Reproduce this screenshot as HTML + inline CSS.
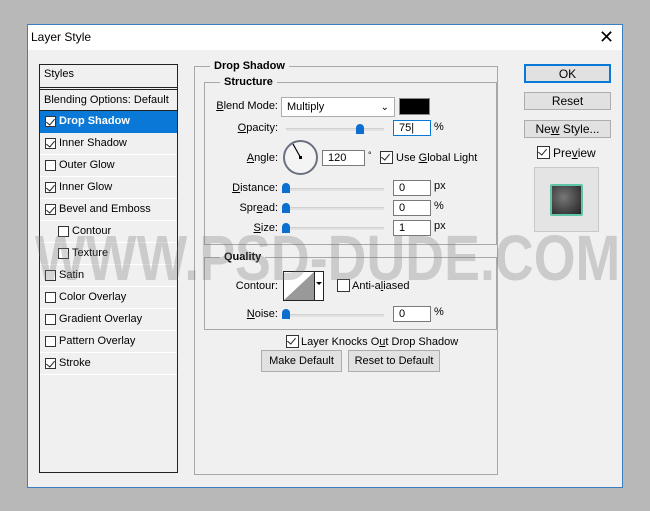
<!DOCTYPE html><html><head><style>
*{margin:0;padding:0;box-sizing:border-box}
body{width:650px;height:511px;background:#b8b8b8;position:relative;overflow:hidden;font-family:"Liberation Sans",sans-serif;font-size:11px;color:#000}
.a{position:absolute}
.dlg{left:27px;top:24px;width:596px;height:464px;background:#f0f0f0;border:1px solid #3c7fc1}
.title{left:28px;top:25px;width:594px;height:25px;background:#fff}
.cb{position:absolute;width:11px;height:11px;border:1px solid #333;background:#fff}
.chk::after{content:"";position:absolute;left:2px;top:0px;width:4px;height:7px;border:solid #222;border-width:0 1.3px 1.3px 0;transform:rotate(40deg)}
.row{position:absolute;left:40px;width:137px;height:22px;border-bottom:1px solid #fff;line-height:21px}
.fs{position:absolute;border:1px solid #a8a8a8}
.leg{position:absolute;background:#f0f0f0;font-weight:bold;padding:0 4px;font-size:11px}
.lbl{position:absolute;text-align:right;font-size:11px}
.inp{position:absolute;background:#fff;border:1px solid #7a7a7a;height:16px;padding-left:5px;line-height:15px;font-size:11px}
.track{position:absolute;height:3px;background:#e2e2e2;border-top:1px solid #d0d0d0}
.th{position:absolute;width:8px;height:10px;background:#0a6fcf;border-radius:4px 4px 0 0}
.btn{position:absolute;background:#e1e1e1;border:1px solid #adadad;text-align:center;font-size:12px}
u{text-decoration:underline}
</style></head><body>
<div class="a dlg"></div>
<div class="a title"></div>
<div class="a" style="left:31px;top:30px;font-size:12px">Layer Style</div>
<div class="a" style="left:599px;top:27px;font-size:18px;font-weight:300">✕</div>

<div class="a" style="left:39px;top:64px;width:139px;height:409px;border:1px solid #222;background:#f0f0f0"></div>
<div class="a" style="left:44px;top:68px">Styles</div>
<div class="a" style="left:40px;top:87px;width:137px;height:3px;border-top:1px solid #222;border-bottom:1px solid #222"></div>
<div class="a" style="left:44px;top:94px">Blending Options: Default</div>
<div class="a" style="left:40px;top:110px;width:137px;border-top:1px solid #222"></div>
<div class="a" style="left:40px;top:111px;width:137px;height:22px;background:#0a78d7"></div>
<div class="cb chk" style="left:45px;top:116px"></div>
<div class="a" style="left:59px;top:115px;color:#fff;font-weight:bold">Drop Shadow</div>
<div class="row" style="top:133px"><div class="cb chk" style="left:5px;top:5px"></div><span style="margin-left:19px">Inner Shadow</span></div>
<div class="row" style="top:155px"><div class="cb" style="left:5px;top:5px"></div><span style="margin-left:19px">Outer Glow</span></div>
<div class="row" style="top:177px"><div class="cb chk" style="left:5px;top:5px"></div><span style="margin-left:19px">Inner Glow</span></div>
<div class="row" style="top:199px"><div class="cb chk" style="left:5px;top:5px"></div><span style="margin-left:19px">Bevel and Emboss</span></div>
<div class="row" style="top:221px"><div class="cb" style="left:18px;top:5px"></div><span style="margin-left:32px">Contour</span></div>
<div class="row" style="top:243px"><div class="cb" style="left:18px;top:5px"></div><span style="margin-left:32px">Texture</span></div>
<div class="row" style="top:265px"><div class="cb" style="left:5px;top:5px"></div><span style="margin-left:19px">Satin</span></div>
<div class="row" style="top:287px"><div class="cb" style="left:5px;top:5px"></div><span style="margin-left:19px">Color Overlay</span></div>
<div class="row" style="top:309px"><div class="cb" style="left:5px;top:5px"></div><span style="margin-left:19px">Gradient Overlay</span></div>
<div class="row" style="top:331px"><div class="cb" style="left:5px;top:5px"></div><span style="margin-left:19px">Pattern Overlay</span></div>
<div class="row" style="top:353px"><div class="cb chk" style="left:5px;top:5px"></div><span style="margin-left:19px">Stroke</span></div>

<div class="fs" style="left:194px;top:66px;width:304px;height:409px"></div>
<div class="leg" style="left:210px;top:60px">Drop Shadow</div>
<div class="fs" style="left:204px;top:82px;width:293px;height:163px"></div>
<div class="leg" style="left:220px;top:76px">Structure</div>
<div class="lbl" style="left:200px;width:78px;top:100px"><u>B</u>lend Mode:</div>
<div class="inp" style="left:281px;top:97px;width:114px;height:20px;border-color:#adadad;line-height:19px">Multiply<span style="position:absolute;right:5px;top:0;font-size:10px">&#8964;</span></div>
<div class="a" style="left:399px;top:98px;width:31px;height:17px;background:#000;border:1px solid #888"></div>
<div class="lbl" style="left:200px;width:78px;top:122px"><u>O</u>pacity:</div>
<div class="track" style="left:286px;top:128px;width:98px"></div>
<div class="th" style="left:356px;top:124px"></div>
<div class="inp" style="left:393px;top:120px;width:38px;border:1px solid #0a78d7">75|</div>
<div class="a" style="left:434px;top:121px">%</div>
<div class="lbl" style="left:200px;width:78px;top:152px"><u>A</u>ngle:</div>
<svg class="a" style="left:282px;top:139px" width="37" height="37"><circle cx="18.5" cy="18.5" r="16.5" fill="#f4f4f4" stroke="#6a7080" stroke-width="2"/><line x1="18.5" y1="18.5" x2="11" y2="5" stroke="#000" stroke-width="1.2"/><rect x="17" y="17" width="3" height="3" fill="#000"/></svg>
<div class="inp" style="left:322px;top:150px;width:43px">120</div>
<div class="a" style="left:368px;top:150px;font-size:9px">°</div>
<div class="cb chk" style="left:380px;top:151px;width:13px;height:13px"></div>
<div class="a" style="left:396px;top:152px">Use <u>G</u>lobal Light</div>
<div class="lbl" style="left:200px;width:78px;top:182px"><u>D</u>istance:</div>
<div class="track" style="left:286px;top:188px;width:98px"></div>
<div class="th" style="left:282px;top:183px"></div>
<div class="inp" style="left:393px;top:180px;width:38px">0</div><div class="a" style="left:434px;top:180px">px</div>
<div class="lbl" style="left:200px;width:78px;top:202px">Spr<u>e</u>ad:</div>
<div class="track" style="left:286px;top:207px;width:98px"></div>
<div class="th" style="left:282px;top:203px"></div>
<div class="inp" style="left:393px;top:200px;width:38px">0</div><div class="a" style="left:434px;top:200px">%</div>
<div class="lbl" style="left:200px;width:78px;top:222px"><u>S</u>ize:</div>
<div class="track" style="left:286px;top:227px;width:98px"></div>
<div class="th" style="left:282px;top:223px"></div>
<div class="inp" style="left:393px;top:220px;width:38px">1</div><div class="a" style="left:434px;top:220px">px</div>

<div class="fs" style="left:204px;top:257px;width:293px;height:73px"></div>
<div class="leg" style="left:220px;top:251px">Quality</div>
<div class="lbl" style="left:200px;width:78px;top:280px">Contour:</div>
<div class="a" style="left:283px;top:271px;width:41px;height:30px;border:1px solid #222;background:#fff;overflow:hidden">
<svg width="32" height="28" style="position:absolute;left:0;top:0"><polygon points="0,28 30,0 30,28" fill="#999"/></svg>
<div style="position:absolute;left:30px;top:0;width:1px;height:30px;background:#222"></div>
<div style="position:absolute;left:32px;top:10px;border:3px solid transparent;border-top:3px solid #000"></div></div>
<div class="cb" style="left:337px;top:279px;width:13px;height:13px"></div>
<div class="a" style="left:352px;top:280px">Anti-a<u>l</u>iased</div>
<div class="lbl" style="left:200px;width:78px;top:308px"><u>N</u>oise:</div>
<div class="track" style="left:286px;top:314px;width:98px"></div>
<div class="th" style="left:282px;top:309px"></div>
<div class="inp" style="left:393px;top:306px;width:38px">0</div><div class="a" style="left:434px;top:306px">%</div>
<div class="cb chk" style="left:286px;top:335px;width:13px;height:13px"></div>
<div class="a" style="left:301px;top:336px">Layer Knocks O<u>u</u>t Drop Shadow</div>
<div class="btn" style="left:261px;top:350px;width:81px;height:22px;line-height:20px;font-size:11px">Make Default</div>
<div class="btn" style="left:348px;top:350px;width:92px;height:22px;line-height:20px;font-size:11px">Reset to Default</div>

<div class="btn" style="left:524px;top:64px;width:87px;height:19px;line-height:16px;border:2px solid #0a78d7">OK</div>
<div class="btn" style="left:524px;top:92px;width:87px;height:18px;line-height:16px">Reset</div>
<div class="btn" style="left:524px;top:120px;width:87px;height:18px;line-height:16px">Ne<u>w</u> Style...</div>
<div class="cb chk" style="left:537px;top:146px;width:13px;height:13px"></div>
<div class="a" style="left:553px;top:146px;font-size:12px">Pre<u>v</u>iew</div>
<div class="a" style="left:534px;top:167px;width:65px;height:65px;border:1px solid #c8c8c8;background:#e4e4e4"></div>
<div class="a" style="left:550px;top:184px;width:33px;height:32px;background:radial-gradient(circle at 40% 40%,#777,#222);border:2px solid #5fc4a8;border-radius:2px"></div>

<div class="a" style="left:35px;top:221px;font-size:64px;font-weight:bold;color:rgba(120,120,120,0.3);white-space:nowrap;transform:scaleX(0.84);transform-origin:left top">WWW.PSD-DUDE.COM</div>
</body></html>
